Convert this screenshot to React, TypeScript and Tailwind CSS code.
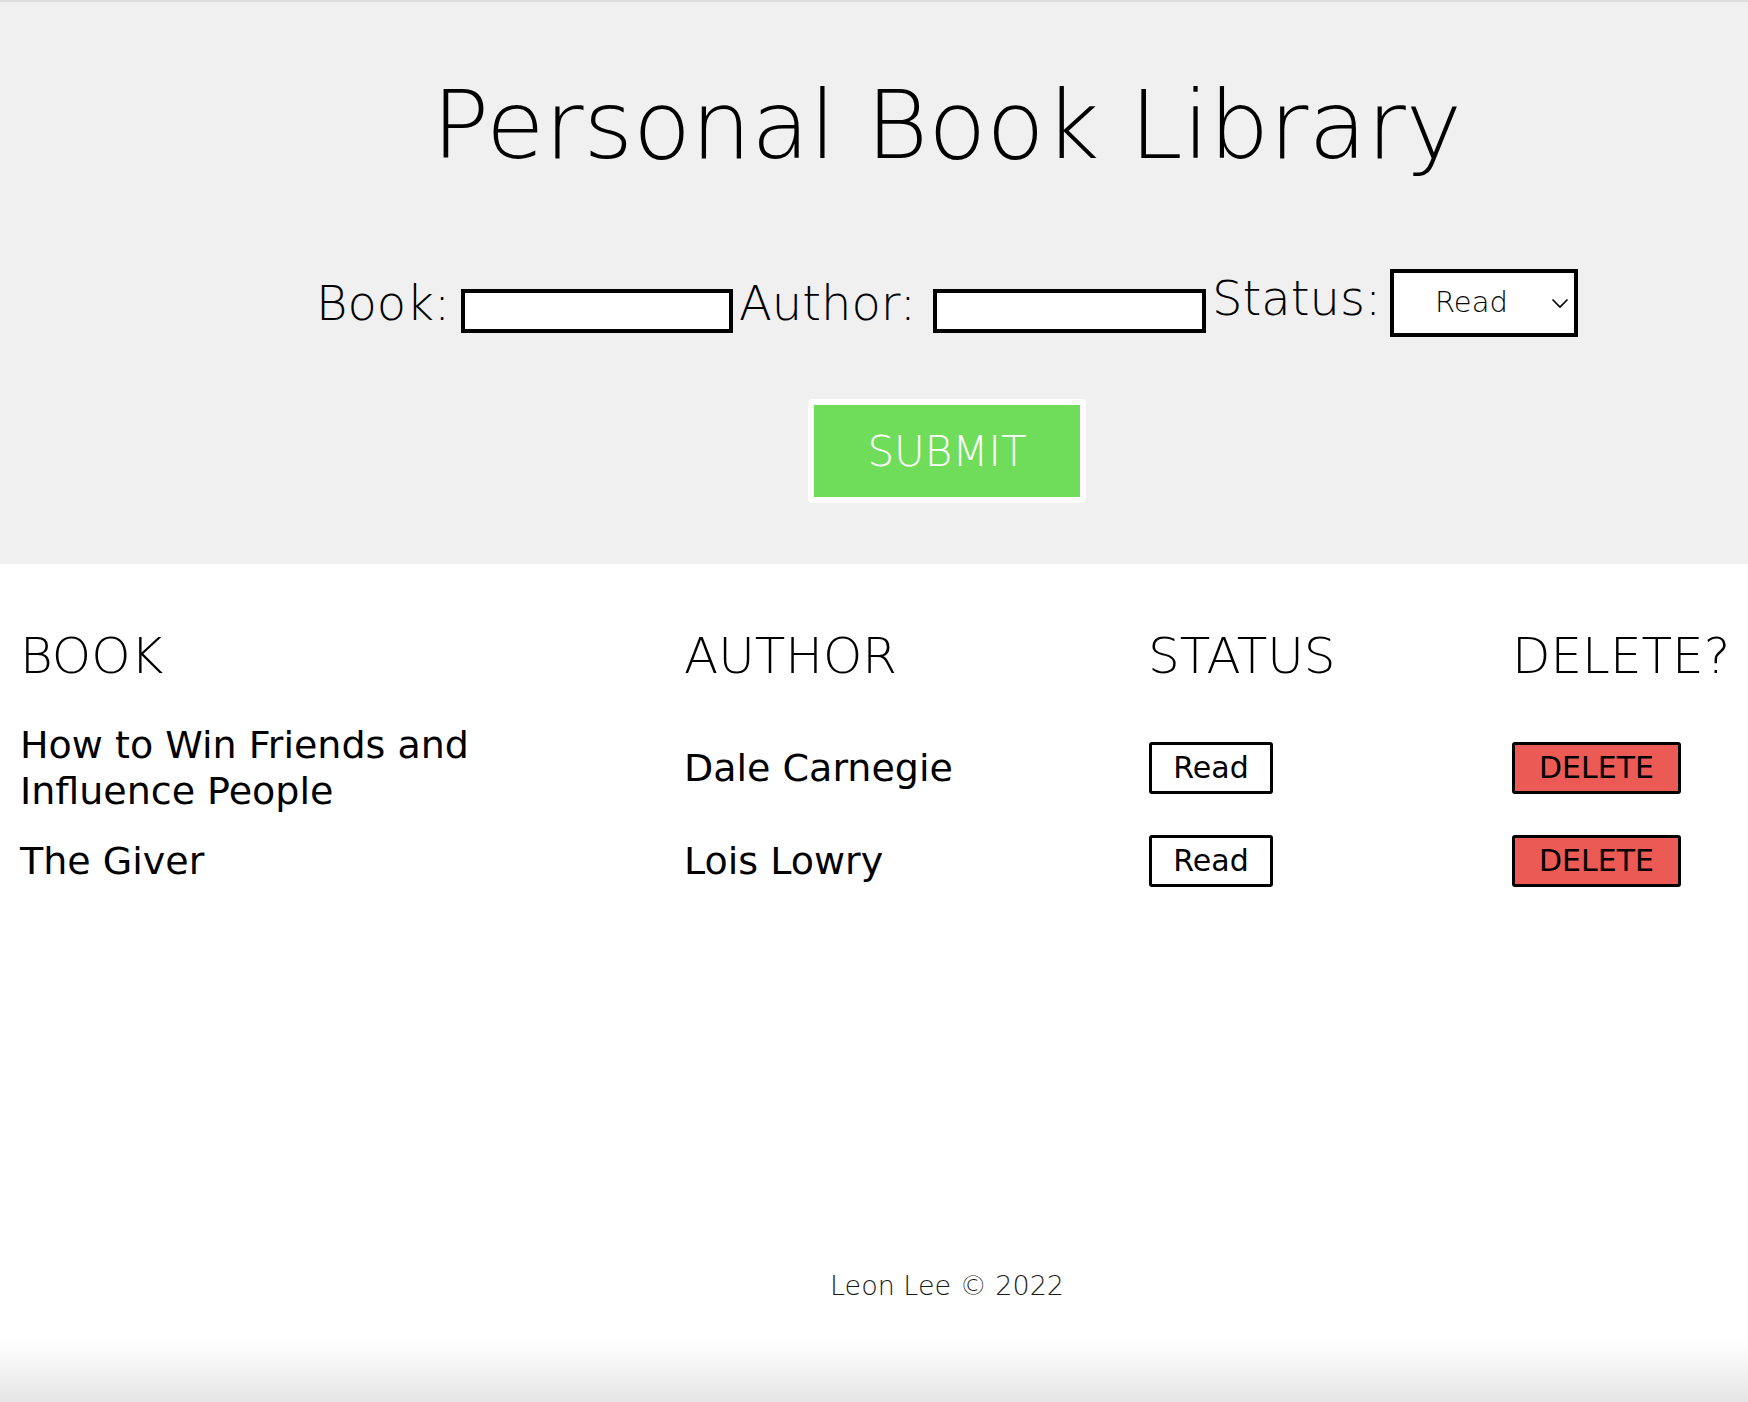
import { useState } from "react";

interface Book {
  title: string;
  author: string;
  status: string;
}

const initialBooks: Book[] = [
  { title: "How to Win Friends and Influence People", author: "Dale Carnegie", status: "Read" },
  { title: "The Giver", author: "Lois Lowry", status: "Read" },
];

const font = { fontFamily: '"DejaVu Sans", "Noto Sans", sans-serif' };

export default function App() {
  const [books, setBooks] = useState<Book[]>(initialBooks);
  const [title, setTitle] = useState("");
  const [author, setAuthor] = useState("");
  const [status, setStatus] = useState("Read");

  const addBook = () => {
    if (!title || !author) return;
    setBooks([...books, { title, author, status }]);
    setTitle("");
    setAuthor("");
  };

  return (
    <div className="flex min-h-[1402px] flex-col bg-white text-black" style={font}>
      {/* Header with the form */}
      <header className="border-t-2 border-[#dedede] bg-[#f0f0f0] pl-[146px] pt-[76px] pb-[61px]">
        <h1 className="text-center text-[95px] font-extralight leading-none">Personal Book Library</h1>

        <div className="mt-[96px] flex items-start justify-center">
          <label className="mt-[10px] w-[145px] text-[48px] font-extralight leading-none">Book:</label>
          <input
            value={title}
            onChange={(e) => setTitle(e.target.value)}
            className="mt-[20px] h-[44px] w-[272px] border-4 border-black bg-white px-2 text-[24px] outline-none"
          />
          <label className="mt-[10px] w-[200px] pl-[6px] text-[48px] font-extralight leading-none">Author:</label>
          <input
            value={author}
            onChange={(e) => setAuthor(e.target.value)}
            className="mt-[20px] h-[44px] w-[273px] border-4 border-black bg-white px-2 text-[24px] outline-none"
          />
          <label className="mt-[5px] w-[184px] pl-[6px] text-[48px] font-extralight leading-none">Status:</label>
          <div className="relative">
            <select
              value={status}
              onChange={(e) => setStatus(e.target.value)}
              className="h-[68px] w-[188px] appearance-none border-4 border-black bg-white pl-[41px] text-[29px] font-extralight outline-none"
            >
              <option>Read</option>
              <option>Unread</option>
            </select>
            <svg
              className="pointer-events-none absolute right-[9px] top-[29px]"
              width="18"
              height="11"
              viewBox="0 0 18 11"
              fill="none"
              stroke="black"
              strokeWidth="1.6"
            >
              <path d="M1.5 1.5l7.5 7.5 7.5-7.5" />
            </svg>
          </div>
        </div>

        <div className="mt-[62px] flex justify-center">
          <button
            onClick={addBook}
            className="h-[104px] w-[278px] rounded-[4px] border-[6px] border-white bg-[#70dd5a] text-[42px] font-extralight text-white"
          >
            SUBMIT
          </button>
        </div>
      </header>

      {/* Book table */}
      <main className="flex-1 px-[22px] pt-[67px]">
        <div className="grid grid-cols-[662px_466px_365px_1fr] text-[50px] font-extralight leading-none">
          <div className="-ml-[2px]">BOOK</div>
          <div>AUTHOR</div>
          <div className="-ml-[2px]">STATUS</div>
          <div className="-ml-[3px]">DELETE?</div>
        </div>

        <div className="mt-[41px] flex flex-col gap-[21px]">
          {books.map((book, i) => (
            <div key={i} className="grid grid-cols-[662px_466px_365px_1fr] items-center text-[38px] leading-[46px]">
              <div className="-ml-[2px] max-w-[500px]">{book.title}</div>
              <div>{book.author}</div>
              <div>
                <div className="-ml-[1px] flex h-[52px] w-[124px] items-center justify-center rounded-[3px] border-[3px] border-black text-[30px]">
                  {book.status}
                </div>
              </div>
              <div>
                <button
                  onClick={() => setBooks(books.filter((_, j) => j !== i))}
                  className="-ml-[3px] flex h-[52px] w-[169px] items-center justify-center rounded-[3px] border-[3px] border-black bg-[#ec5a55] text-[30px]"
                >
                  DELETE
                </button>
              </div>
            </div>
          ))}
        </div>
      </main>

      <footer className="mb-[41px] pl-[146px] text-center text-[27px] font-extralight leading-none text-[#1a1a1a]">
        Leon Lee © 2022
      </footer>
      <div className="h-[62px] bg-gradient-to-b from-white to-[#e5e5e5]" />
    </div>
  );
}
